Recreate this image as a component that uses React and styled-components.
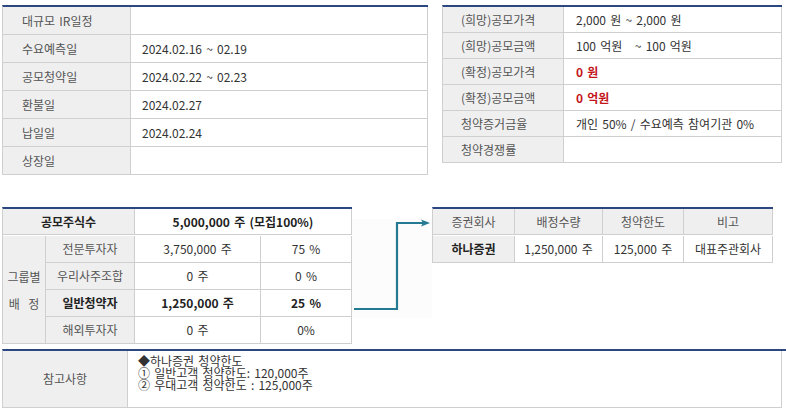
import React from 'react';
import styled, { createGlobalStyle } from 'styled-components';

const GlobalStyle = createGlobalStyle`
  body {
    margin: 0;
    background: #fff;
    font-family: "Noto Sans CJK KR", "Noto Sans", sans-serif;
    font-size: 12px;
    color: #333;
    word-spacing: 1.5px;
  }
`;

const Page = styled.div`
  width: 786px;
  padding: 5px 0 0 2px;
  box-sizing: border-box;
`;

const Section = styled.div`
  display: flex;
  align-items: flex-start;
  gap: ${(p) => p.gap || 0}px;
  margin-bottom: ${(p) => p.mb || 0}px;
`;

const Grid = styled.div`
  display: grid;
  grid-template-columns: ${(p) => p.cols};
  grid-auto-rows: ${(p) => p.row}px;
  border-top: 2px solid #2b4782;
  border-left: 1px solid #cfcfcf;
`;

const Cell = styled.div`
  box-sizing: border-box;
  border-right: 1px solid #cfcfcf;
  border-bottom: 1px solid #cfcfcf;
  display: flex;
  align-items: center;
  justify-content: ${(p) => (p.center ? 'center' : 'flex-start')};
  text-align: ${(p) => (p.center ? 'center' : 'left')};
  padding-left: ${(p) => (p.center ? 0 : p.pl || 0)}px;
  background: ${(p) => (p.head ? '#efefef' : '#fff')};
  color: ${(p) => (p.head ? '#555' : '#333')};
  font-weight: ${(p) => (p.bold ? 700 : 400)};
  line-height: 14px;
  white-space: nowrap;
  ${(p) => p.bold && 'color: #222;'}
  ${(p) => p.span && `grid-column: span ${p.span};`}
  ${(p) => p.rows && `grid-row: span ${p.rows};`}
  ${(p) => p.h && `height: ${p.h}px;`}
`;

const Red = styled.span`
  color: #c3161c;
  font-weight: 700;
`;

const GroupLabel = styled.div`
  line-height: 27px;
  text-align: center;
`;

const ArrowBox = styled.svg`
  display: block;
  width: 80px;
  height: 99px;
  margin-top: 12px;
  background: #fcfcfc;
`;

const NoteCell = styled(Cell)`
  align-items: flex-start;
  justify-content: flex-start;
  padding-top: 4px;
  line-height: 12px;
  flex-direction: column;
  color: #333;
`;

const schedule = [
  ['대규모 IR일정', ''],
  ['수요예측일', '2024.02.16 ~ 02.19'],
  ['공모청약일', '2024.02.22 ~ 02.23'],
  ['환불일', '2024.02.27'],
  ['납일일', '2024.02.24'],
  ['상장일', ''],
];

const offer = [
  ['(희망)공모가격', '2,000 원 ~ 2,000 원'],
  ['(희망)공모금액', '100 억원 \u00a0 ~ 100 억원'],
  ['(확정)공모가격', <Red>0 원</Red>],
  ['(확정)공모금액', <Red>0 억원</Red>],
  ['청약증거금율', '개인 50% / 수요예측 참여기관 0%'],
  ['청약경쟁률', ''],
];

const groups = [
  ['전문투자자', '3,750,000 주', '75 %'],
  ['우리사주조합', '0 주', '0 %'],
  ['일반청약자', '1,250,000 주', '25 %', true],
  ['해외투자자', '0 주', '0%'],
];

export default function App() {
  return (
    <Page>
      <GlobalStyle />
      <Section gap={14} mb={32}>
        <Grid cols="128px 297px" row={28}>
          {schedule.map(([k, v]) => (
            <React.Fragment key={k}>
              <Cell head pl={19}>{k}</Cell>
              <Cell pl={11}>{v}</Cell>
            </React.Fragment>
          ))}
        </Grid>
        <Grid cols="121px 218px" row={26}>
          {offer.map(([k, v]) => (
            <React.Fragment key={k}>
              <Cell head pl={18}>{k}</Cell>
              <Cell pl={12}>{v}</Cell>
            </React.Fragment>
          ))}
        </Grid>
      </Section>

      <Section mb={5}>
        <Grid cols="43px 89px 126px 91px" row={27}>
          <Cell head bold center span={2} h={26}>공모주식수</Cell>
          <Cell bold center span={2} h={26}>5,000,000 주 (모집100%)</Cell>
          <Cell head center rows={4}>
            <GroupLabel>
              그룹별
              <br />
              배{'\u00a0\u00a0'}정
            </GroupLabel>
          </Cell>
          {groups.map(([k, a, b, bold]) => (
            <React.Fragment key={k}>
              <Cell head center bold={bold}>{k}</Cell>
              <Cell center bold={bold}>{a}</Cell>
              <Cell center bold={bold}>{b}</Cell>
            </React.Fragment>
          ))}
        </Grid>
        <ArrowBox viewBox="0 0 80 99">
          <path d="M2 90 H45 V4 H72" fill="none" stroke="#237a92" strokeWidth="2.2" />
          <polygon points="69,0.5 78,4 69,7.5 71,4" fill="#237a92" />
        </ArrowBox>
        <Grid cols="82px 88px 81px 89px" row={27}>
          <Cell head center h={26}>증권회사</Cell>
          <Cell head center h={26}>배정수량</Cell>
          <Cell head center h={26}>청약한도</Cell>
          <Cell head center h={26}>비고</Cell>
          <Cell head center bold>하나증권</Cell>
          <Cell center>1,250,000 주</Cell>
          <Cell center>125,000 주</Cell>
          <Cell center>대표주관회사</Cell>
        </Grid>
      </Section>

      <Grid cols="125px 654px" row={57}>
        <Cell head center>참고사항</Cell>
        <NoteCell pl={10}>
          <div>◆하나증권 청약한도</div>
          <div>① 일반고객 청약한도: 120,000주</div>
          <div>② 우대고객 청약한도 : 125,000주</div>
        </NoteCell>
      </Grid>
    </Page>
  );
}
